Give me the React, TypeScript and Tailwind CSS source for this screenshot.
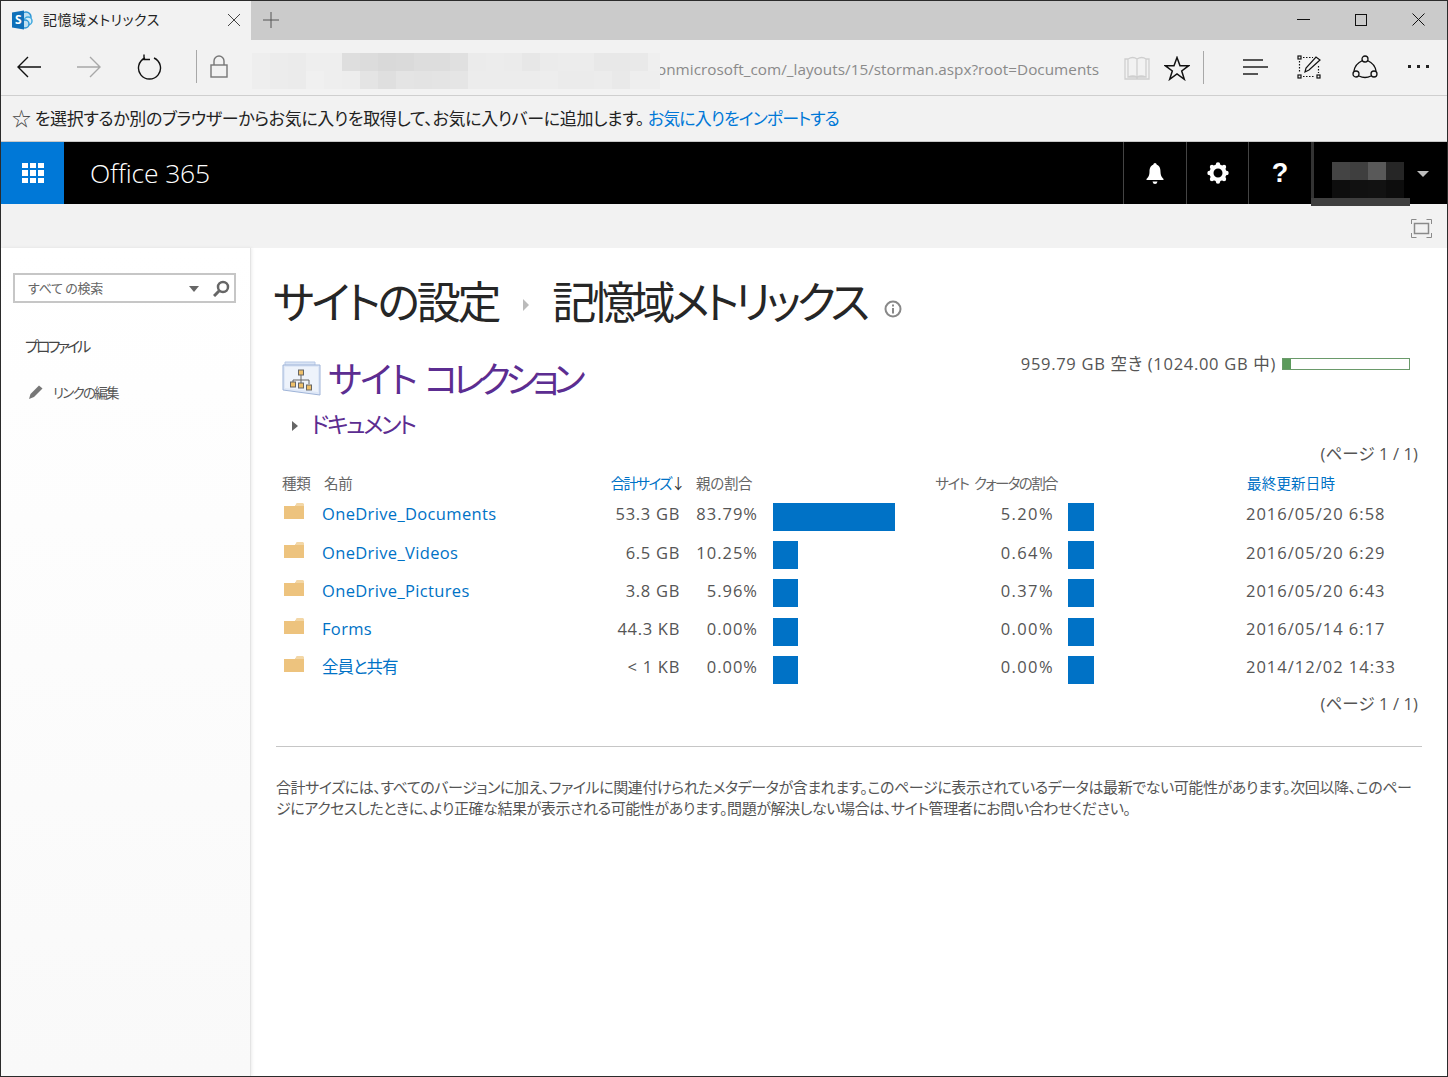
import React from "react";

const rowA = ["bg-[#eeeeee]","bg-[#ececec]","bg-[#ebebeb]","bg-[#eeeeee]","bg-[#eeeeee]","bg-[#dedede]","bg-[#dcdcdc]","bg-[#d9d9d9]","bg-[#dadada]","bg-[#dddddd]","bg-[#dddddd]","bg-[#e0e0e0]","bg-[#ebebeb]","bg-[#ececec]","bg-[#ebebeb]","bg-[#e7e7e7]","bg-[#ebebeb]","bg-[#ececec]","bg-[#ececec]","bg-[#e8e8e8]","bg-[#e8e8e8]","bg-[#e9e9e9]","bg-[#efefef]"];
const rowB = ["bg-[#eeeeee]","bg-[#ececec]","bg-[#ebebeb]","bg-[#f0f0f0]","bg-[#eeeeee]","bg-[#ededed]","bg-[#e4e4e4]","bg-[#dfdfdf]","bg-[#e4e4e4]","bg-[#e3e3e3]","bg-[#e4e4e4]","bg-[#e5e5e5]","bg-[#ececec]","bg-[#ececec]","bg-[#ececec]","bg-[#ececec]","bg-[#ededed]","bg-[#ebebeb]","bg-[#ebebeb]","bg-[#ececec]","bg-[#e9e9e9]","bg-[#eeeeee]","bg-[#eeeeee]"];

const rows = [
  { n: "OneDrive_Documents", s: "53.3 GB", p: "83.79%", w: "w-[122px]", q: "5.20%", d: "2016/05/20 6:58", h: "h-[38px]", t: "", c: "tracking-[0.35px]" },
  { n: "OneDrive_Videos", s: "6.5 GB", p: "10.25%", w: "w-[25px]", q: "0.64%", d: "2016/05/20 6:29", h: "h-[38px]", t: "pt-[1px]", c: "tracking-[0.35px]" },
  { n: "OneDrive_Pictures", s: "3.8 GB", p: "5.96%", w: "w-[25px]", q: "0.37%", d: "2016/05/20 6:43", h: "h-[39px]", t: "pt-[1px]", c: "tracking-[0.35px]" },
  { n: "Forms", s: "44.3 KB", p: "0.00%", w: "w-[25px]", q: "0.00%", d: "2016/05/14 6:17", h: "h-[38px]", t: "", c: "tracking-[0.35px]" },
  { n: "全員と共有", s: "< 1 KB", p: "0.00%", w: "w-[25px]", q: "0.00%", d: "2014/12/02 14:33", h: "h-[38px]", t: "", c: "tracking-[-1px]" },
];

function Folder() {
  return (
    <svg width="20" height="16" viewBox="0 0 20 16" className="block ml-[2px]">
      <path d="M0 3h11l2-3h6v1h1v15H0z" fill="#eec57f" />
      <path d="M11 3l2-3h6l1 1v2z" fill="#f3d7a6" />
      <path d="M0 3h20v13H0z" fill="#edc37e" />
    </svg>
  );
}

function SiteIcon() {
  return (
    <svg width="40" height="38" viewBox="0 0 40 38" className="block">
      <path d="M3 2h30v4H3z" fill="#d9e4f5" stroke="#b7c8e6" />
      <path d="M1 5l37 0v30L1 30z" fill="#dfe8f7" stroke="#9fb4d8" />
      <path d="M3 7h33v25L3 28z" fill="#eef3fb" />
      <path d="M19 13v6M11 24v-4h16v4M19 19v5" stroke="#666" fill="none" />
      <rect x="16.5" y="10" width="5" height="5" fill="#efc06a" stroke="#666" />
      <rect x="8.5" y="22" width="5" height="5" fill="#efc06a" stroke="#666" />
      <rect x="16.5" y="23" width="5" height="5" fill="#efc06a" stroke="#666" />
      <rect x="24.5" y="25" width="5" height="5" fill="#efc06a" stroke="#666" />
    </svg>
  );
}

export default function App() {
  return (
    <div className="w-[1448px] h-[1077px] overflow-hidden bg-white border border-[#2b2b2b] flex flex-col text-[#444] font-['Open_Sans','Noto_Sans_CJK_JP',sans-serif] [font-feature-settings:'palt']">
      {/* title bar */}
      <div className="h-[39px] shrink-0 bg-[#cbcbcb] flex items-stretch">
        <div className="w-[250px] bg-[#f2f2f2] flex items-center pl-[11px] pr-[10px] pb-[2px]">
          <div className="relative w-[21px] h-[20px] shrink-0">
            <svg width="21" height="20" viewBox="0 0 21 20" className="absolute left-0 top-0">
              <circle cx="14" cy="7" r="5" fill="#bfe0f2" stroke="#2f97d6" strokeWidth="1.500" />
              <circle cx="16" cy="11" r="4" fill="#d8eef8" stroke="#3fa8de" strokeWidth="1.500" />
              <circle cx="13" cy="14" r="4" fill="#bfe0f2" stroke="#2f97d6" strokeWidth="1.500" />
              <path d="M0 2.500L12 .5v19L0 17.500z" fill="#0f70b9" />
            </svg>
            <span className="absolute left-[3px] top-[1px] text-[12px] leading-[18px] font-bold text-white">S</span>
          </div>
          <span className="ml-[10px] text-[14px] text-[#222] font-['Noto_Sans_CJK_JP',sans-serif] flex-1 tracking-[0.5px]">記憶域メトリックス</span>
          <svg width="14" height="14" viewBox="0 0 14 14" stroke="#444" strokeWidth="1"><path d="M1 1l12 12M13 1L1 13" /></svg>
        </div>
        <div className="w-[40px] flex items-center justify-center pb-[2px]">
          <svg width="16" height="16" viewBox="0 0 16 16" stroke="#555" strokeWidth="1"><path d="M8 0v16M0 8h16" /></svg>
        </div>
        <div className="flex-1" />
        <div className="flex items-center pr-[22px] gap-[45px] pb-[2px]">
          <svg width="13" height="13" viewBox="0 0 13 13" stroke="#111"><path d="M0 6.5h13" /></svg>
          <svg width="12" height="12" viewBox="0 0 12 12" stroke="#111" fill="none"><rect x=".5" y=".5" width="11" height="11" /></svg>
          <svg width="13" height="13" viewBox="0 0 13 13" stroke="#111"><path d="M.5.5l12 12M12.5.5l-12 12" /></svg>
        </div>
      </div>
      {/* nav bar */}
      <div className="h-[56px] shrink-0 bg-[#f2f2f2] border-b border-[#cfcfcf] flex items-center relative pb-[2px]">
        <svg className="ml-[15px]" width="26" height="22" viewBox="0 0 26 22" fill="none" stroke="#111" strokeWidth="1.4"><path d="M25 11H2M12 1L2 11l10 10" /></svg>
        <svg className="ml-[34px]" width="26" height="22" viewBox="0 0 26 22" fill="none" stroke="#a8a8a8" strokeWidth="1.4"><path d="M1 11h23M14 1l10 10-10 10" /></svg>
        <svg className="ml-[35px]" width="26" height="26" viewBox="0 0 26 26" fill="none" stroke="#111" strokeWidth="1.4"><path d="M8 3.5a11 11 0 1 0 9 0M7 0v5H13" transform="translate(0 0.5)" /></svg>
        <div className="ml-[33px] w-px h-[33px] bg-[#a8a8a8]" />
        <svg className="ml-[13px]" width="18" height="23" viewBox="0 0 18 23" fill="none" stroke="#777" strokeWidth="1.4"><rect x="1" y="10" width="16" height="12" /><path d="M4 10V6a5 5 0 0 1 10 0v4" /></svg>
        <div className="ml-[24px] w-[408px] h-[36px] mt-[8px] flex flex-col shrink-0 overflow-hidden">
          <div className="flex h-[18px]">{rowA.map((c, i) => <div key={i} className={"w-[18px] shrink-0 " + c} />)}</div>
          <div className="flex h-[18px]">{rowB.map((c, i) => <div key={i} className={"w-[18px] shrink-0 " + c} />)}</div>
        </div>
        <span className="ml-[-3px] mt-[6px] w-[460px] text-[15.300px] text-[#8a8a8a] whitespace-nowrap tracking-[0.02px] [clip-path:inset(0_0_0_3px)]">onmicrosoft_com/_layouts/15/storman.aspx?root=Documents</span>
        <div className="absolute left-[1123px] top-[16px]">
          <svg width="26" height="24" viewBox="0 0 26 24" fill="none" stroke="#cfcfcf" strokeWidth="1.3"><path d="M1 3h3v18h8l1 1 1-1h8V3h3v20H1zM4 3q5-3 9 0v18q-4-2-9 0zM13 3q5-3 9 0v18q-5-2-9 0z" /></svg>
        </div>
        <div className="absolute left-[1163px] top-[16px]">
          <svg width="26" height="25" viewBox="0 0 26 25" fill="none" stroke="#111" strokeWidth="1.5"><path d="M13 1.5l3 8.2h8.7l-7 5.300 2.600 8.300L13 18l-7.300 5.300L8.300 15l-7-5.300H10z" /></svg>
        </div>
        <div className="absolute left-[1202px] top-[11px] w-px h-[33px] bg-[#a8a8a8]" />
        <div className="absolute left-[1241px] top-[19px]">
          <svg width="26" height="16" viewBox="0 0 26 16" stroke="#222" strokeWidth="1.4"><path d="M1 1h20M1 8h25M1 15h15" /></svg>
        </div>
        <div className="absolute left-[1296px] top-[15px]">
          <svg width="25" height="25" viewBox="0 0 25 25" fill="none" stroke="#111" strokeWidth="1.2"><rect x="1" y="1" width="3" height="3" /><rect x="1" y="20" width="3" height="3" /><rect x="20" y="20" width="3" height="3" /><path d="M6 2.500h10M2.500 6v12M6 21.500h12M21.500 11v7" strokeDasharray="1.5 1.5" /><path d="M8 17l1-4L19 2l4 3-11 10z" /></svg>
        </div>
        <div className="absolute left-[1351px] top-[15px]">
          <svg width="26" height="25" viewBox="0 0 26 25" fill="none" stroke="#111" strokeWidth="1.3"><circle cx="13" cy="4" r="3" /><circle cx="4" cy="19" r="3" /><circle cx="22" cy="19" r="3" /><path d="M10.500 5.500Q3 9 2 16M15.500 5.500Q23 9 24 16M7 21q6 3 12 0" /></svg>
        </div>
        <div className="absolute left-[1407px] top-[25px] flex gap-[6px]">
          <div className="w-[3px] h-[3px] bg-[#222]" /><div className="w-[3px] h-[3px] bg-[#222]" /><div className="w-[3px] h-[3px] bg-[#222]" />
        </div>
      </div>
      {/* favourites bar */}
      <div className="h-[46px] shrink-0 bg-[#f2f2f2] flex items-center pl-[11px] pb-[1px] text-[17px] text-[#222] font-['Noto_Sans_CJK_JP',sans-serif] tracking-[-0.35px] whitespace-nowrap border-b border-[#c8c8c8]">
        <span className="text-[#444] text-[19px] mr-[4px]">☆</span>
        <span>を選択するか別のブラウザーからお気に入りを取得して、お気に入りバーに追加します。</span>
        <span className="text-[#0078d7] ml-[4px] tracking-[-0.95px]">お気に入りをインポートする</span>
      </div>
      {/* suite bar */}
      <div className="h-[62px] shrink-0 bg-black flex items-stretch relative">
        <div className="w-[63px] bg-[#0078d7] flex items-center justify-center">
          <div className="grid grid-cols-3 gap-[2px]">
            {[0,1,2,3,4,5,6,7,8].map((i) => <div key={i} className="w-[6px] h-[5.500px] bg-white" />)}
          </div>
        </div>
        <div className="ml-[26px] pt-[2px] flex items-center text-[26.500px] text-white font-['Open_Sans',sans-serif] font-light tracking-[-0.15px]">Office 365</div>
        <div className="flex-1" />
        <div className="w-[63px] border-l border-[#444] flex items-center justify-center">
          <svg width="18" height="21" viewBox="0 0 18 21" fill="#fff"><path d="M9 0q1.500 0 1.800 1.800C14 3 14.500 6 14.500 9c0 3 1 5 3 7v1H.5v-1c2-2 3-4 3-7 0-3 .5-6 3.700-7.200Q7.500 0 9 0zM6.500 18.500h5Q11 21 9 21t-2.500-2.500z" /></svg>
        </div>
        <div className="w-[62px] border-l border-[#444] flex items-center justify-center">
          <svg width="22" height="22" viewBox="0 0 22 22"><circle cx="11" cy="11" r="6.500" fill="none" stroke="#fff" strokeWidth="4" /><circle cx="11" cy="2.500" r="2.200" fill="#fff" /><circle cx="11" cy="19.500" r="2.200" fill="#fff" /><circle cx="2.500" cy="11" r="2.200" fill="#fff" /><circle cx="19.500" cy="11" r="2.200" fill="#fff" /><circle cx="5" cy="5" r="2.200" fill="#fff" /><circle cx="17" cy="5" r="2.200" fill="#fff" /><circle cx="5" cy="17" r="2.200" fill="#fff" /><circle cx="17" cy="17" r="2.200" fill="#fff" /></svg>
        </div>
        <div className="w-[63px] border-l border-[#444] flex items-center justify-center text-white text-[27px] font-bold font-['Liberation_Sans',sans-serif]">?</div>
        <div className="w-[136px] border-l-[3px] border-[#333] relative flex items-center">
          <div className="absolute left-[18px] top-[20px] flex flex-col">
            <div className="flex h-[18px]">
              <div className="w-[18px] bg-[#444]" /><div className="w-[18px] bg-[#3f3f3f]" /><div className="w-[18px] bg-[#595959]" /><div className="w-[18px] bg-[#262626]" />
            </div>
            <div className="flex h-[18px]">
              <div className="w-[18px] bg-[#0e0e0e]" /><div className="w-[18px] bg-[#111]" /><div className="w-[18px] bg-[#121212]" /><div className="w-[18px] bg-[#0d0d0d]" />
            </div>
          </div>
          <div className="absolute left-[103px] top-[29px] border-x-[6px] border-x-transparent border-t-[6px] border-t-[#bdbdbd]" />
          <div className="absolute left-[-3px] top-[56px] w-[99px] h-[8px] bg-[#3f3f3f] z-10" />
        </div>
      </div>
      {/* ribbon */}
      <div className="h-[44px] shrink-0 bg-[#f2f2f2] flex items-center justify-end pr-[15px] pt-[4px]">
        <svg width="21" height="19" viewBox="0 0 21 19" fill="none" stroke="#8a8a8a" strokeWidth="1"><path d="M.5 5V.5h5M15.500.5h5V5M.5 14v4.500h5M15.500 18.500h5V14" /><rect x="3.500" y="4.500" width="14" height="10" strokeWidth="1.500" /></svg>
      </div>
      {/* body */}
      <div className="flex-1 flex min-h-0">
        <aside className="w-[250px] shrink-0 bg-gradient-to-b from-white to-[#f9f9f9] border-r border-[#e4e4e4] shadow-[1px_0_3px_rgba(0,0,0,0.08)] pl-[12px]">
          <div className="mt-[25px] w-[223px] h-[30px] border-2 border-[#c6c6c6] bg-white flex items-center pl-[13px] text-[13px] text-[#666] font-['Noto_Sans_CJK_JP',sans-serif] tracking-[-0.3px] relative">
            <span>すべて の検索</span>
            <div className="absolute left-[174px] top-[11px] border-x-[5px] border-x-transparent border-t-[6px] border-t-[#666]" />
            <svg className="absolute left-[198px] top-[5px]" width="17" height="17" viewBox="0 0 17 17" fill="none" stroke="#666" strokeWidth="2.500"><circle cx="10" cy="7" r="5" /><path d="M6 11l-5 5" strokeWidth="3" /></svg>
          </div>
          <div className="mt-[31px] ml-[12px] text-[15px] text-[#444] font-['Noto_Sans_CJK_JP',sans-serif] tracking-[-2.800px] leading-[24px]">プロファイル</div>
          <div className="mt-[24px] ml-[15px] flex items-center text-[13.500px] text-[#555] font-['Noto_Sans_CJK_JP',sans-serif] tracking-[-1.750px]">
            <svg width="16" height="16" viewBox="0 0 16 16" fill="#777"><path d="M1 15l1.500-5L11 1.500l3.500 3L6 13z" /></svg>
            <span className="ml-[9px]">リンクの編集</span>
          </div>
        </aside>
        <main className="flex-1 min-w-0 pl-[25px] pr-[25px]">
          <div className="mt-[19px] flex items-center h-[66px] text-[44px] text-[#262626] font-['Noto_Sans_CJK_JP',sans-serif] whitespace-nowrap ml-[-3px]">
            <span className="tracking-[-3.200px]">サイトの設定</span>
            <div className="ml-[25px] mr-[23px] mt-[10px] border-y-[6px] border-y-transparent border-l-[6px] border-l-[#bbb]" />
            <span className="tracking-[-4.400px]">記憶域メトリックス</span>
            <svg className="ml-[18px] mt-[17px]" width="18" height="18" viewBox="0 0 18 18" fill="none" stroke="#888" strokeWidth="2"><circle cx="9" cy="9" r="7.500" /><path d="M9 8v5.500M9 4.500v2" /></svg>
          </div>
          <div className="flex justify-between h-[58px] mt-[15px] relative">
            <div className="flex items-center ml-[6px] mt-[7px] h-[48px]">
              <SiteIcon />
              <span className="ml-[6px] mt-[-4px] text-[36px] text-[#5c2d91] font-['Noto_Sans_CJK_JP',sans-serif] whitespace-nowrap">
                <span className="tracking-[-1.800px] [word-spacing:2px]">サイト </span><span className="tracking-[-5.800px]">コレクション</span>
              </span>
            </div>
            <div className="flex items-center h-[20px] mt-[6px] mr-[12px] text-[16.500px] text-[#555] tracking-[0.7px] whitespace-nowrap">
              <span>959.79 GB 空き (1024.00 GB 中)</span>
              <div className="ml-[6px] w-[128px] h-[12px] border border-[#6a9a6a] bg-white">
                <div className="w-[8px] h-full bg-[#5b9a5b]" />
              </div>
            </div>
          </div>
          <div className="flex items-center h-[32px] ml-[16px] mt-[1px]">
            <div className="mt-[5px] border-y-[5px] border-y-transparent border-l-[6px] border-l-[#666]" />
            <span className="ml-[13px] text-[23px] text-[#5c2d91] font-['Noto_Sans_CJK_JP',sans-serif] tracking-[-2.300px]">ドキュメント</span>
          </div>
          <div className="mt-[3px] text-right pr-[4px] text-[16.500px] tracking-[0.1px] text-[#555] h-[24px] leading-[24px]">(ページ 1 / 1)</div>
          <div className="ml-[6px] mt-[3px] pt-[1px] grid grid-cols-[40px_250px_108px_77px_203px_93px_193px_1fr] items-center h-[26px] text-[14.500px] text-[#666] font-['Noto_Sans_CJK_JP',sans-serif] tracking-[-0.300px] whitespace-nowrap">
            <div>種類</div>
            <div className="pl-[2px]">名前</div>
            <div className="flex justify-end mr-[-4px] text-[#0072c6] tracking-[-1.600px]">合計サイズ<span className="text-[#333]">↓</span></div>
            <div className="pl-[16px]">親の割合</div>
            <div />
            <div className="flex justify-end mr-[-4px] tracking-[-1.600px] [word-spacing:4px]">サイト クォータの割合</div>
            <div />
            <div className="text-[#0072c6] pl-[1px] tracking-[0.200px]">最終更新日時</div>
          </div>
          <div className="mt-[8px]">
          {rows.map((r) => (
            <div key={r.n} className={"ml-[6px] grid grid-cols-[40px_250px_108px_77px_203px_93px_193px_1fr] items-start text-[16.500px] leading-[21px] text-[#555] whitespace-nowrap " + r.h}>
              <div className={r.t}><Folder /></div>
              <div className={"text-[#0072c6] " + r.c + " " + r.t}>{r.n}</div>
              <div className={"text-right tracking-[0.7px] " + r.t}>{r.s}</div>
              <div className={"text-right tracking-[1px] mr-[-1px] " + r.t}>{r.p}</div>
              <div className="pl-[16px]"><div className={"h-[28px] bg-[#0072c6] " + r.w} /></div>
              <div className={"text-right tracking-[1.400px] mr-[-1px] " + r.t}>{r.q}</div>
              <div className="pl-[15px]"><div className="w-[26px] h-[28px] bg-[#0072c6]" /></div>
              <div className={"tracking-[1px] " + r.t}>{r.d}</div>
            </div>
          ))}
          </div>
          <div className="mt-[-2px] text-right pr-[4px] text-[16.500px] tracking-[0.1px] text-[#555] h-[24px] leading-[24px]">(ページ 1 / 1)</div>
          <div className="mt-[30px] h-px bg-[#c6c6c6]" />
          <p className="mt-[29px] text-[15px] leading-[21px] text-[#555] font-['Noto_Sans_CJK_JP',sans-serif] tracking-[-0.410px]">
            合計サイズには、すべてのバージョンに加え、ファイルに関連付けられたメタデータが含まれます。このページに表示されているデータは最新でない可能性があります。次回以降、このページにアクセスしたときに、より正確な結果が表示される可能性があります。問題が解決しない場合は、サイト管理者にお問い合わせください。
          </p>
        </main>
      </div>
    </div>
  );
}
